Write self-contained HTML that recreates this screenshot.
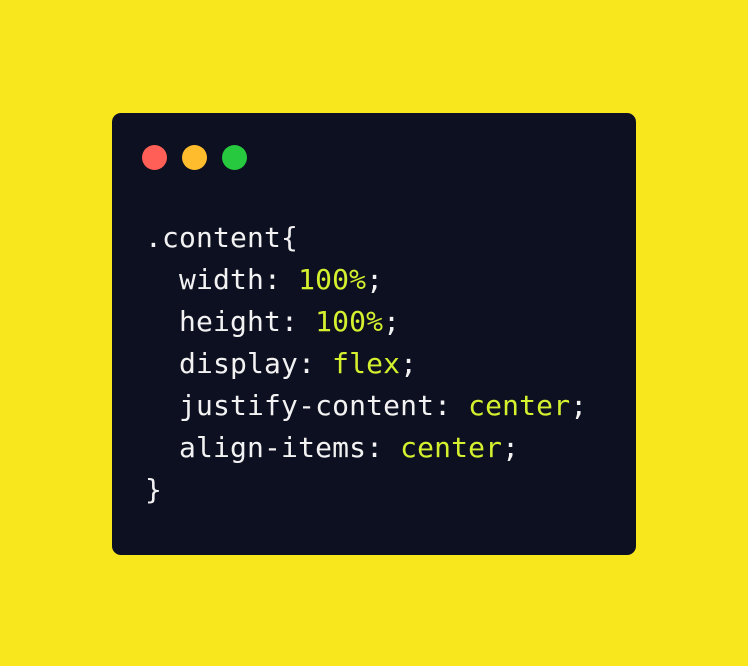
<!DOCTYPE html>
<html><head><style>
html,body{margin:0;padding:0}
body{width:748px;height:666px;background:#f9e71e;position:relative;overflow:hidden}
.card{position:absolute;left:112px;top:113px;width:524px;height:442px;background:#0d1020;border-radius:9px}
.dot{position:absolute;top:32px;width:25px;height:25px;border-radius:50%}
pre{position:absolute;left:33px;top:104px;margin:0;font-family:"DejaVu Sans Mono","Liberation Mono",monospace;font-size:28px;letter-spacing:0.15px;line-height:42px;color:#f2f2f2}
.v{color:#d4f02f}
</style></head><body>
<div class="card">
<div class="dot" style="left:29.5px;background:#ff5f56"></div>
<div class="dot" style="left:69.5px;background:#ffbd2e"></div>
<div class="dot" style="left:109.5px;background:#27c93f"></div>
<pre>.content{
  width: <span class="v">100%</span>;
  height: <span class="v">100%</span>;
  display: <span class="v">flex</span>;
  justify-content: <span class="v">center</span>;
  align-items: <span class="v">center</span>;
}</pre>
</div>
</body></html>
